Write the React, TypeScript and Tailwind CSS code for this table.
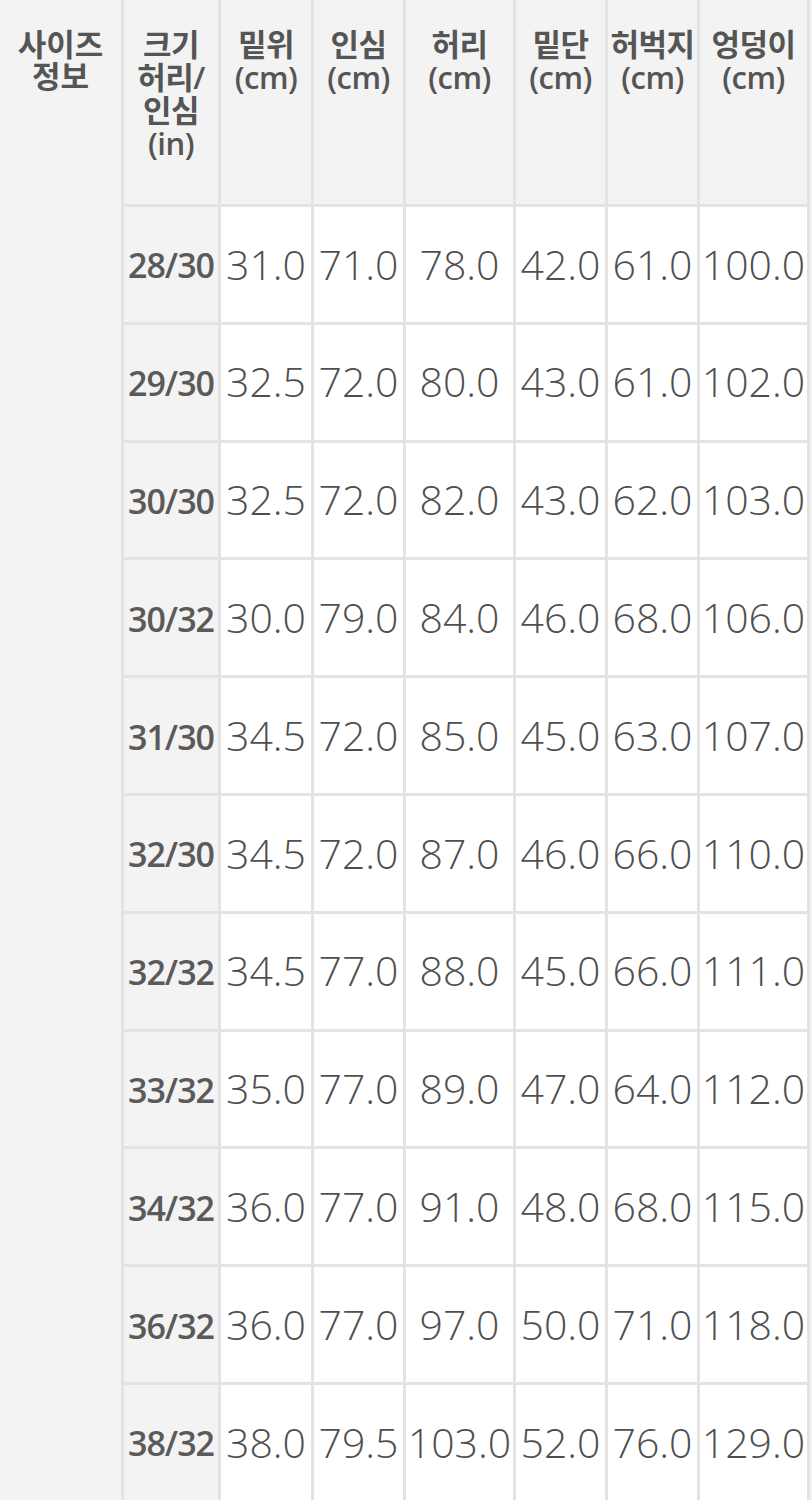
import React from "react";

const headers: string[][] = [
  ["크기", "허리/", "인심", "(in)"],
  ["밑위", "(cm)"],
  ["인심", "(cm)"],
  ["허리", "(cm)"],
  ["밑단", "(cm)"],
  ["허벅지", "(cm)"],
  ["엉덩이", "(cm)"],
];

const rows: [string, string[]][] = [
  ["28/30", ["31.0", "71.0", "78.0", "42.0", "61.0", "100.0"]],
  ["29/30", ["32.5", "72.0", "80.0", "43.0", "61.0", "102.0"]],
  ["30/30", ["32.5", "72.0", "82.0", "43.0", "62.0", "103.0"]],
  ["30/32", ["30.0", "79.0", "84.0", "46.0", "68.0", "106.0"]],
  ["31/30", ["34.5", "72.0", "85.0", "45.0", "63.0", "107.0"]],
  ["32/30", ["34.5", "72.0", "87.0", "46.0", "66.0", "110.0"]],
  ["32/32", ["34.5", "77.0", "88.0", "45.0", "66.0", "111.0"]],
  ["33/32", ["35.0", "77.0", "89.0", "47.0", "64.0", "112.0"]],
  ["34/32", ["36.0", "77.0", "91.0", "48.0", "68.0", "115.0"]],
  ["36/32", ["36.0", "77.0", "97.0", "50.0", "71.0", "118.0"]],
  ["38/32", ["38.0", "79.5", "103.0", "52.0", "76.0", "129.0"]],
];

const font = "font-['Open_Sans','Noto_Sans_CJK_KR',sans-serif]";

export default function App() {
  return (
    <div className={`w-full min-h-[1500px] bg-[#f3f3f3] ${font}`}>
      <div className="grid w-[810px] grid-cols-[121px_94px_90px_89px_107px_89px_89px_107px] grid-rows-[204px_repeat(11,114.8px)] gap-[3px] bg-[#e3e3e3] pr-[3px]">
        <div className="row-span-12 bg-[#f3f3f3] pt-[28px] text-center text-[31px] font-bold leading-[32px] text-[#555555]">
          <div>사이즈</div>
          <div>정보</div>
        </div>
        {headers.map((h, i) => (
          <div
            key={i}
            className="flex flex-col items-center bg-[#f3f3f3] pt-[28px] text-center text-[31px] font-semibold leading-[33px] tracking-[-0.5px] whitespace-nowrap text-[#555555]"
          >
            {h.map((t, j) => (
              <div key={j}>{t}</div>
            ))}
          </div>
        ))}
        {rows.map(([label, vals]) => (
          <React.Fragment key={label}>
            <div className="flex items-center justify-center bg-[#f3f3f3] pt-[3px] text-[34px] font-semibold tracking-[-1px] whitespace-nowrap text-[#5a5a5a]">
              {label}
            </div>
            {vals.map((v, k) => (
              <div
                key={k}
                className="flex items-center justify-center bg-white text-[41px] font-light whitespace-nowrap text-[#4f4f4f]"
              >
                {v}
              </div>
            ))}
          </React.Fragment>
        ))}
      </div>
    </div>
  );
}
